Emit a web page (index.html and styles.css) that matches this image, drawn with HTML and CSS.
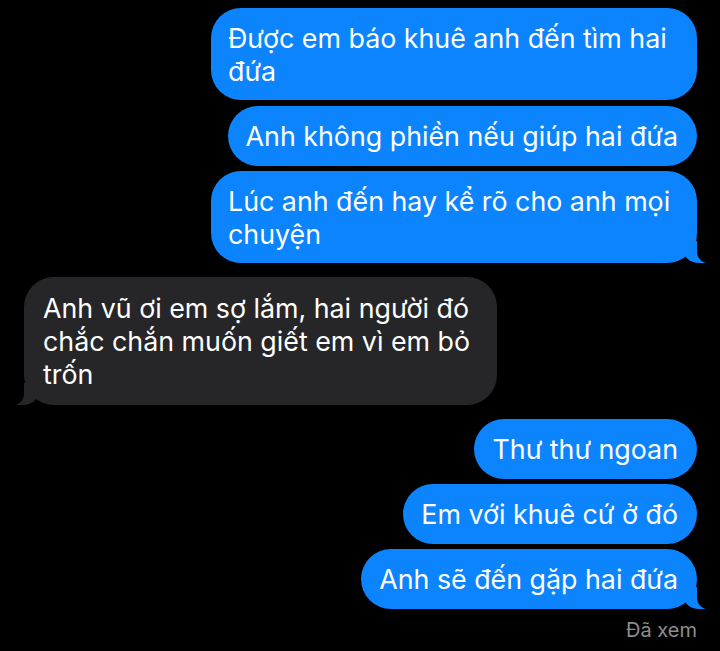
FILE: index.html
```html
<!DOCTYPE html>
<html lang="vi">
<head>
<meta charset="utf-8">
<link rel="stylesheet" href="styles.css">
</head>
<body>
<main class="chat">
  <section class="group group-out group-first">
    <div class="bubble out multi">Được em báo khuê anh đến tìm hai<br>đứa</div>
    <div class="bubble out">Anh không phiền nếu giúp hai đứa</div>
    <div class="bubble out multi tail-right">Lúc anh đến hay kể rõ cho anh mọi<br>chuyện</div>
  </section>
  <section class="group group-in">
    <div class="bubble in multi-in tail-left">Anh vũ ơi em sợ lắm, hai người đó<br>chắc chắn muốn giết em vì em bỏ<br>trốn</div>
  </section>
  <section class="group group-out">
    <div class="bubble out">Thư thư ngoan</div>
    <div class="bubble out">Em với khuê cứ ở đó</div>
    <div class="bubble out tail-right">Anh sẽ đến gặp hai đứa</div>
    <div class="status">Đã xem</div>
  </section>
</main>
</body>
</html>
```

FILE: styles.css
```css
html, body {
  margin: 0;
  padding: 0;
  background: #000;
}

body {
  width: 720px;
  height: 651px;
  overflow: hidden;
  font-family: Inter, "Noto Sans", "Liberation Sans", sans-serif;
  -webkit-font-smoothing: antialiased;
}

.chat {
  display: flex;
  flex-direction: column;
  gap: 14px;
  padding: 8px 23px 0 24px;
}

.group {
  display: flex;
  flex-direction: column;
  gap: 5px;
}

.group-first {
  gap: 5.5px;
}

.group-out {
  align-items: flex-end;
}

.group-in {
  align-items: flex-start;
}

.bubble {
  position: relative;
  box-sizing: border-box;
  font-size: 26.8px;
  line-height: 33px;
  color: #fff;
  padding: 14px 19px 13px 18px;
  border-radius: 30px;
  white-space: nowrap;
}

.out {
  background: #0b84fe;
}

.in {
  background: #262628;
  padding: 15px 19px 14px 19px;
  line-height: 33px;
}

.multi {
  width: 486px;
  padding: 14px 19px 12px 17px;
}

.multi-in {
  width: 473px;
}

.tail-right::before,
.tail-right::after,
.tail-left::before,
.tail-left::after {
  content: "";
  position: absolute;
  bottom: 0;
  height: 22px;
}

.tail-right::before {
  right: -8px;
  width: 22px;
  background: #0b84fe;
  border-bottom-left-radius: 16px 14px;
}

.tail-right::after {
  right: -12px;
  width: 12px;
  background: #000;
  border-bottom-left-radius: 11px;
}

.tail-left::before {
  left: -7px;
  width: 22px;
  background: #262628;
  border-bottom-right-radius: 16px 14px;
}

.tail-left::after {
  left: -12px;
  width: 12px;
  background: #000;
  border-bottom-right-radius: 11px;
}

.status {
  margin-top: 4px;
  font-size: 20px;
  line-height: 24px;
  color: #8d8d92;
}
```
